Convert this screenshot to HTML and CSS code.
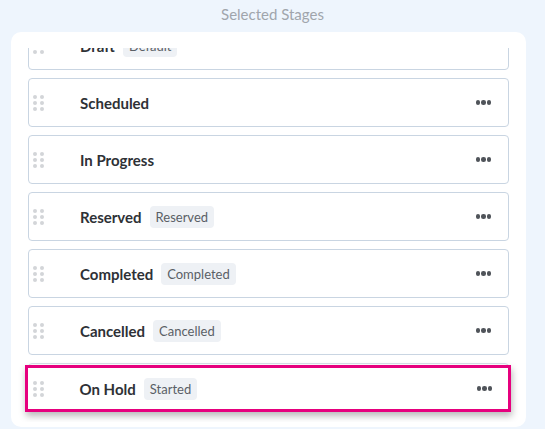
FILE: index.html
```html
<!DOCTYPE html>
<html>
<head>
<meta charset="utf-8">
<link rel="stylesheet" href="styles.css">
</head>
<body>
<div class="page">
  <div class="title">Selected Stages</div>
  <div class="card">
    <div class="viewport">
      <div class="list">
        <div class="row">
          <span class="grip"><i></i><i></i><i></i><i></i><i></i><i></i></span>
          <span class="name">Draft</span><span class="badge">Default</span>
          <span class="more"><i></i><i></i><i></i></span>
        </div>
        <div class="row">
          <span class="grip"><i></i><i></i><i></i><i></i><i></i><i></i></span>
          <span class="name">Scheduled</span>
          <span class="more"><i></i><i></i><i></i></span>
        </div>
        <div class="row">
          <span class="grip"><i></i><i></i><i></i><i></i><i></i><i></i></span>
          <span class="name">In Progress</span>
          <span class="more"><i></i><i></i><i></i></span>
        </div>
        <div class="row">
          <span class="grip"><i></i><i></i><i></i><i></i><i></i><i></i></span>
          <span class="name">Reserved</span><span class="badge">Reserved</span>
          <span class="more"><i></i><i></i><i></i></span>
        </div>
        <div class="row">
          <span class="grip"><i></i><i></i><i></i><i></i><i></i><i></i></span>
          <span class="name">Completed</span><span class="badge">Completed</span>
          <span class="more"><i></i><i></i><i></i></span>
        </div>
        <div class="row">
          <span class="grip"><i></i><i></i><i></i><i></i><i></i><i></i></span>
          <span class="name">Cancelled</span><span class="badge">Cancelled</span>
          <span class="more"><i></i><i></i><i></i></span>
        </div>
        <div class="row placeholder">
          <div class="row dragging">
            <span class="grip"><i></i><i></i><i></i><i></i><i></i><i></i></span>
            <span class="name">On Hold</span><span class="badge">Started</span>
            <span class="more"><i></i><i></i><i></i></span>
          </div>
        </div>
      </div>
    </div>
  </div>
</div>
</body>
</html>
```

FILE: styles.css
```css
html, body {
  margin: 0;
  padding: 0;
}
body {
  background: #eef5fd;
  font-family: Lato, "Open Sans", "Liberation Sans", sans-serif;
  width: 545px;
  height: 429px;
  overflow: hidden;
}
.page {
  display: flex;
  flex-direction: column;
}
.title {
  height: 32px;
  line-height: 29px;
  text-align: center;
  font-size: 15px;
  color: #a0a5ac;
}
.card {
  margin-left: 11px;
  width: 515px;
  height: 395px;
  background: #fff;
  border-radius: 10px;
  box-sizing: border-box;
  padding: 16px 17px 15px 17px;
}
.viewport {
  display: flow-root;
  height: 364px;
  position: relative;
  clip-path: inset(0 -20px -10px -20px);
}
.list {
  margin-top: -27px;
  display: flex;
  flex-direction: column;
  gap: 8px;
}
.row {
  position: relative;
  height: 49px;
  box-sizing: border-box;
  border: 1px solid #c9d5e2;
  border-radius: 4px;
  display: flex;
  align-items: center;
  background: #fff;
}
.grip {
  display: grid;
  grid-template-columns: 4px 4px;
  grid-auto-rows: 4px;
  column-gap: 3px;
  row-gap: 2px;
  margin-left: 4px;
  width: 47px;
}
.grip i {
  display: block;
  width: 4px;
  height: 4px;
  border-radius: 50%;
  background: #d3d5d8;
}
.name {
  font-weight: 700;
  font-size: 15px;
  color: #2e3136;
}
.badge {
  margin-left: 8px;
  height: 22px;
  line-height: 22px;
  padding: 0 6px;
  font-size: 13px;
  color: #5a5f66;
  background: #eef1f5;
  border-radius: 4px;
}
.more {
  margin-left: auto;
  margin-right: 17px;
  display: flex;
  gap: 1px;
}
.more i {
  display: block;
  width: 4.5px;
  height: 4.5px;
  border-radius: 50%;
  background: #50545a;
}
.placeholder {
  border-color: #d6dee8;
}
.dragging {
  position: absolute;
  left: -4px;
  top: 1px;
  width: 486px;
  height: 47px;
  border: 3.5px solid #e6007e;
  border-radius: 0;
  box-shadow: 1px 4px 7px rgba(0, 0, 0, 0.28);
}
.dragging .grip {
  margin-left: 4.5px;
}
.dragging .more {
  margin-right: 16px;
}
```
